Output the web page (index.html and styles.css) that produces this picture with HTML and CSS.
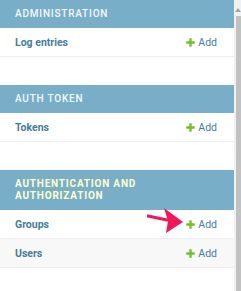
FILE: index.html
```html
<!DOCTYPE html>
<html>
<head>
<meta charset="utf-8">
<link rel="stylesheet" href="styles.css">
</head>
<body>
<div class="page">
  <nav class="sidebar">
    <section class="module">
      <div class="caption">Administration</div>
      <div class="row">
        <span class="model">Log entries</span>
        <span class="add"><svg class="plus" viewBox="0 0 1792 1792" width="11" height="11"><path fill="#70bf2b" d="M1600 796v192q0 40-28 68t-68 28h-416v416q0 40-28 68t-68 28h-192q-40 0-68-28t-28-68v-416h-416q-40 0-68-28t-28-68v-192q0-40 28-68t68-28h416v-416q0-40 28-68t68-28h192q40 0 68 28t28 68v416h416q40 0 68 28t28 68z"/></svg>Add</span>
      </div>
    </section>
    <section class="module">
      <div class="caption">Auth Token</div>
      <div class="row">
        <span class="model">Tokens</span>
        <span class="add"><svg class="plus" viewBox="0 0 1792 1792" width="11" height="11"><path fill="#70bf2b" d="M1600 796v192q0 40-28 68t-68 28h-416v416q0 40-28 68t-68 28h-192q-40 0-68-28t-28-68v-416h-416q-40 0-68-28t-28-68v-192q0-40 28-68t68-28h416v-416q0-40 28-68t68-28h192q40 0 68 28t28 68v416h416q40 0 68 28t28 68z"/></svg>Add</span>
      </div>
    </section>
    <section class="module">
      <div class="caption current">Authentication and<br>Authorization</div>
      <div class="row annotated">
        <span class="model">Groups</span>
        <svg class="arrow" viewBox="0 0 40 28" width="40" height="28"><path d="M1 9 L20 13" stroke="#f0185a" stroke-width="3.2" stroke-linecap="round"/><path fill="#f0185a" d="M17 1 L36 15 L19 26 L21 14 Z"/></svg>
        <span class="add"><svg class="plus" viewBox="0 0 1792 1792" width="11" height="11"><path fill="#70bf2b" d="M1600 796v192q0 40-28 68t-68 28h-416v416q0 40-28 68t-68 28h-192q-40 0-68-28t-28-68v-416h-416q-40 0-68-28t-28-68v-192q0-40 28-68t68-28h416v-416q0-40 28-68t68-28h192q40 0 68 28t28 68v416h416q40 0 68 28t28 68z"/></svg>Add</span>
      </div>
      <div class="row shaded">
        <span class="model">Users</span>
        <span class="add"><svg class="plus" viewBox="0 0 1792 1792" width="11" height="11"><path fill="#70bf2b" d="M1600 796v192q0 40-28 68t-68 28h-416v416q0 40-28 68t-68 28h-192q-40 0-68-28t-28-68v-416h-416q-40 0-68-28t-28-68v-192q0-40 28-68t68-28h416v-416q0-40 28-68t68-28h192q40 0 68 28t28 68v416h416q40 0 68 28t28 68z"/></svg>Add</span>
      </div>
    </section>
  </nav>
  <div class="scrollbar">
    <div class="scroll-arrow"></div>
    <div class="thumb"></div>
  </div>
</div>
</body>
</html>
```
FILE: styles.css
```css
html, body {
  margin: 0;
  padding: 0;
  background: #fff;
}
body {
  font-family: Roboto, "Liberation Sans", sans-serif;
}
.page {
  display: flex;
  height: 291px;
  overflow: hidden;
}
.sidebar {
  width: 234px;
  flex: none;
}
.module {
  margin-bottom: 28px;
}
.caption {
  background: #79aec8;
  color: #f4f8fa;
  padding: 8px 15px;
  font-size: 10px;
  line-height: 12px;
  letter-spacing: 0.8px;
  text-transform: uppercase;
  font-weight: 500;
}
.caption.current {
  color: #ffc;
  font-weight: 700;
}
.row {
  position: relative;
  display: flex;
  align-items: center;
  justify-content: space-between;
  height: 28px;
  padding: 0 17px 0 15px;
  border-bottom: 1px solid #eee;
}
.row.shaded {
  background: #f8f8f8;
}
.model {
  color: #447e9b;
  font-weight: 700;
  font-size: 10.5px;
}
.add {
  display: flex;
  align-items: center;
  color: #447e9b;
  font-size: 10.5px;
}
.plus {
  margin-right: 2px;
}
.arrow {
  position: absolute;
  left: 147px;
  top: -3px;
}
.scrollbar {
  flex: 1;
  background: #f1f1f1;
  display: flex;
  flex-direction: column;
  align-items: flex-end;
}
.scroll-arrow {
  width: 0;
  height: 0;
  margin: 8px 0 0;
  border-left: 3px solid transparent;
  border-right: 3px solid transparent;
  border-bottom: 4px solid #a3a3a3;
}
.thumb {
  width: 5px;
  flex: 1;
  margin-top: 4px;
  background: #c1c1c1;
}
```
